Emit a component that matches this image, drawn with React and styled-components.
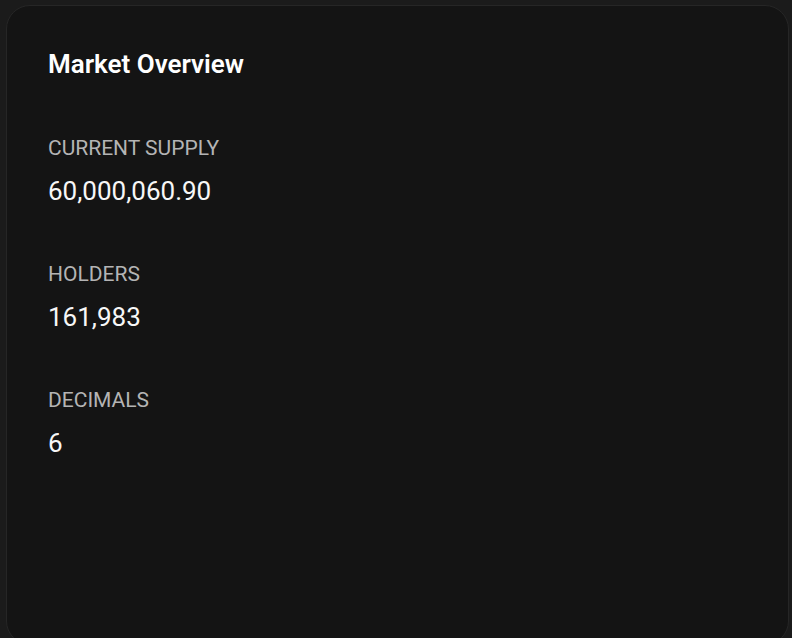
import React from "react";
import styled, { createGlobalStyle } from "styled-components";

const Global = createGlobalStyle`
  html, body { margin: 0; padding: 0; background: #1b1b1b; }
  body { font-family: Roboto, "Liberation Sans", sans-serif; }
`;

const Page = styled.div`
  height: 638px;
  box-sizing: border-box;
  padding: 5px 3px 0 6px;
  overflow: hidden;
`;

const Card = styled.section`
  box-sizing: border-box;
  height: 640px;
  background: #141414;
  border: 1px solid #262626;
  border-radius: 24px;
  padding: 42px 41px;
`;

const Title = styled.h2`
  margin: 0 0 54px;
  font-size: 26px;
  line-height: 32px;
  font-weight: 600;
  color: #ffffff;
`;

const Stats = styled.div`
  display: flex;
  flex-direction: column;
  gap: 53px;
`;

const Stat = styled.div`
  display: flex;
  flex-direction: column;
  gap: 13px;
`;

const Label = styled.div`
  font-size: 21px;
  line-height: 28px;
  color: #b4b4b4;
  text-transform: uppercase;
`;

const Value = styled.div`
  font-size: 26px;
  line-height: 32px;
  color: #f7f7f7;
`;

const stats = [
  { label: "Current Supply", value: "60,000,060.90" },
  { label: "Holders", value: "161,983" },
  { label: "Decimals", value: "6" },
];

export default function App() {
  return (
    <>
      <Global />
      <Page>
        <Card>
          <Title>Market Overview</Title>
          <Stats>
            {stats.map((s) => (
              <Stat key={s.label}>
                <Label>{s.label}</Label>
                <Value>{s.value}</Value>
              </Stat>
            ))}
          </Stats>
        </Card>
      </Page>
    </>
  );
}
